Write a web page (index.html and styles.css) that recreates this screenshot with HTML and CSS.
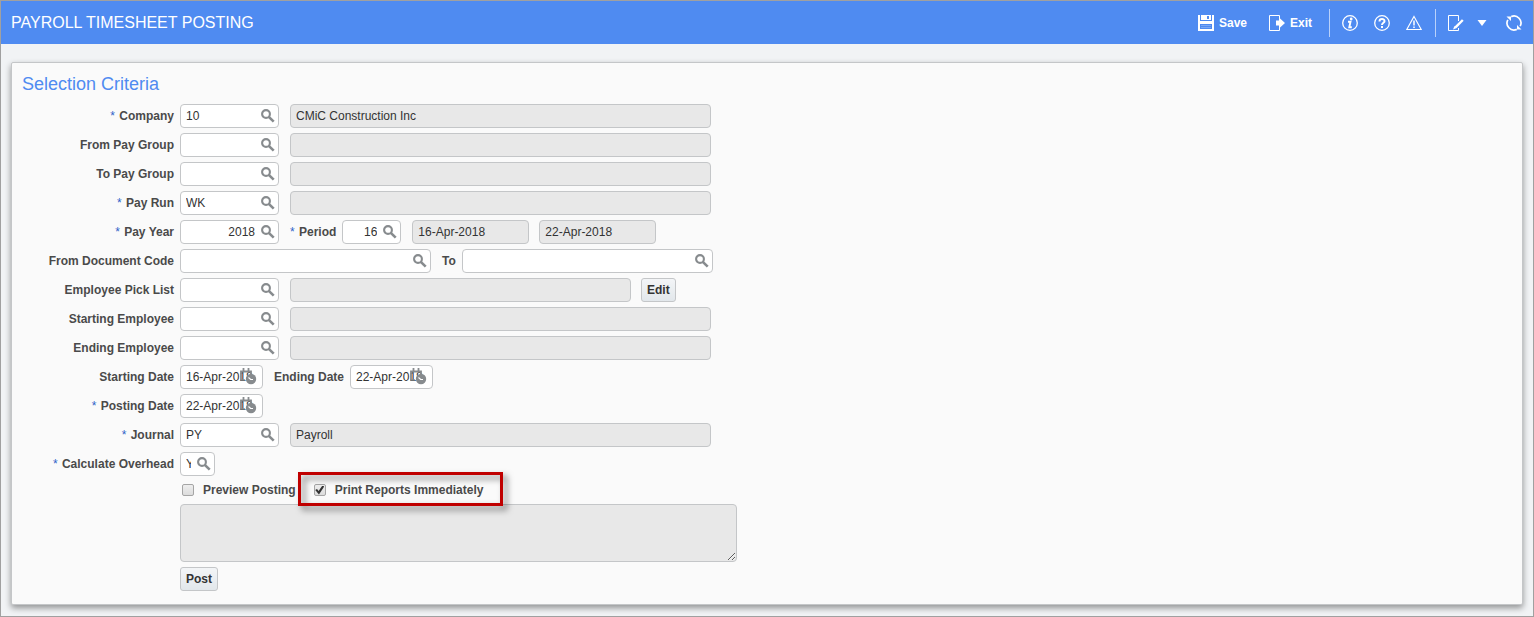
FILE: index.html
```html
<!DOCTYPE html>
<html lang="en">
<head>
    <meta charset="UTF-8">
    <meta name="viewport" content="width=device-width, initial-scale=1.0">
    <title>Payroll Timesheet Posting</title>
    <link rel="stylesheet" href="styles.css">
</head>
<body>

<!-- Shared icons -->
<svg class="sprite" aria-hidden="true">
    <symbol id="lens" viewBox="0 0 14 14">
        <circle cx="5" cy="5" r="3.9" fill="none" stroke="#878b8e" stroke-width="2.1"/>
        <path d="M7.8 7.8L12.7 12.7" stroke="#878b8e" stroke-width="2.6"/>
    </symbol>
    <symbol id="calendar" viewBox="0 0 17 17">
        <path d="M1 12V3.5H11V6M3.5 0V4M8.5 0V4" fill="none" stroke="#878b8e" stroke-width="1.8"/>
        <path d="M0 12H5" stroke="#878b8e" stroke-width="1.4"/>
        <circle cx="11" cy="11" r="5.2" fill="#878b8e"/>
        <path d="M8.5 9.5L10.7 11.5H13" fill="none" stroke="#fff" stroke-width="1.2"/>
    </symbol>
</svg>

<header class="topbar">
    <h1>PAYROLL TIMESHEET POSTING</h1>
    <div class="toolbar">
        <div class="group actions">
            <button type="button">
                <svg width="16" height="16" viewBox="0 0 16 16" fill="#fff">
                    <path d="M0 0H2V6H14V0H16V16H0ZM2 9V14H14V9Z" fill-rule="evenodd"/>
                    <path d="M3 0H13V5H3ZM9 1V4H11V1Z" fill-rule="evenodd"/>
                    <path d="M3 10H13V11H3ZM3 12H13V13H3Z" opacity=".25"/>
                </svg>
                Save
            </button>
            <button type="button">
                <svg width="16" height="16" viewBox="0 0 16 16">
                    <path d="M10.5 4V0.5H0.5V15.5H10.5V12" fill="none" stroke="#fff"/>
                    <path d="M7 5.5H10V2.5L16 8L10 13.5V10.5H7Z" fill="#fff"/>
                </svg>
                Exit
            </button>
        </div>
        <div class="group help">
            <button type="button" aria-label="Information">
                <svg width="16" height="16" viewBox="0 0 16 16">
                    <circle cx="8" cy="8" r="7.3" fill="none" stroke="#fff" stroke-width="1.3"/>
                    <circle cx="9.2" cy="4" r="1.4" fill="#fff"/>
                    <path d="M6 6.8H8.5L7.3 12.2H9.8" fill="none" stroke="#fff" stroke-width="1.9"/>
                </svg>
            </button>
            <button type="button" aria-label="Help">
                <svg width="16" height="16" viewBox="0 0 16 16">
                    <circle cx="8" cy="8" r="7.3" fill="none" stroke="#fff" stroke-width="1.3"/>
                    <path d="M5.5 6.4C5.5 3.2 10.5 3.3 10.5 6.2C10.5 7.8 8 7.7 8 10" fill="none" stroke="#fff" stroke-width="2"/>
                    <path d="M7 11H9V13H7Z" fill="#fff"/>
                </svg>
            </button>
            <button type="button" aria-label="Warnings">
                <svg width="16" height="16" viewBox="0 0 16 16">
                    <path d="M8 1.5L15.2 14.5H0.8Z" fill="none" stroke="#fff" stroke-width="1.1"/>
                    <path d="M8 5.5V10.5M8 11.5V13" stroke="#fff" stroke-width="1.5"/>
                </svg>
            </button>
        </div>
        <div class="group view">
            <button type="button" aria-label="Edit layout">
                <svg width="16" height="16" viewBox="0 0 16 16">
                    <path d="M10.5 6V0.5H0.5V15.5H10.5V13" fill="none" stroke="#fff"/>
                    <path d="M14.8 5L7.5 12.4" stroke="#fff" stroke-width="2.4"/>
                    <path d="M6.5 11L8.7 13.1L5 14.5Z" fill="#fff"/>
                </svg>
            </button>
            <button type="button" aria-label="More">
                <svg width="10" height="6" viewBox="0 0 10 6"><path d="M0.5 0H9.5L5 6Z" fill="#fff"/></svg>
            </button>
            <button type="button" class="refresh" aria-label="Refresh">
                <svg width="16" height="16" viewBox="0 0 16 16">
                    <path d="M5.2 1.6A7 7 0 0 1 14.2 11.2M10.8 14.4A7 7 0 0 1 1.8 4.8" fill="none" stroke="#fff" stroke-width="1.7"/>
                    <path d="M0.5 1.5H5V6ZM15.5 14.5H11V10Z" fill="#fff"/>
                </svg>
            </button>
        </div>
    </div>
</header>

<main class="panel">
    <h2>Selection Criteria</h2>
    <form class="criteria">
        <div class="row">
            <label class="name" for="company"><span class="req">*</span> Company</label>
            <span class="field code"><input type="text" id="company" value="10"><svg class="lens"><use href="#lens"/></svg></span>
            <input class="desc" type="text" value="CMiC Construction Inc" aria-label="Company name" readonly>
        </div>
        <div class="row">
            <label class="name" for="fromGroup">From Pay Group</label>
            <span class="field code"><input type="text" id="fromGroup"><svg class="lens"><use href="#lens"/></svg></span>
            <input class="desc" type="text" aria-label="From pay group name" readonly>
        </div>
        <div class="row">
            <label class="name" for="toGroup">To Pay Group</label>
            <span class="field code"><input type="text" id="toGroup"><svg class="lens"><use href="#lens"/></svg></span>
            <input class="desc" type="text" aria-label="To pay group name" readonly>
        </div>
        <div class="row">
            <label class="name" for="payRun"><span class="req">*</span> Pay Run</label>
            <span class="field code"><input type="text" id="payRun" value="WK"><svg class="lens"><use href="#lens"/></svg></span>
            <input class="desc" type="text" aria-label="Pay run name" readonly>
        </div>
        <div class="row">
            <label class="name" for="payYear"><span class="req">*</span> Pay Year</label>
            <span class="field code number"><input type="text" id="payYear" value="2018"><svg class="lens"><use href="#lens"/></svg></span>
            <label for="period"><span class="req">*</span> Period</label>
            <span class="field period number"><input type="text" id="period" value="16"><svg class="lens"><use href="#lens"/></svg></span>
            <input class="desc date-desc" type="text" value="16-Apr-2018" aria-label="Period start" readonly>
            <input class="desc date-desc" type="text" value="22-Apr-2018" aria-label="Period end" readonly>
        </div>
        <div class="row">
            <label class="name" for="fromDoc">From Document Code</label>
            <span class="field document"><input type="text" id="fromDoc"><svg class="lens"><use href="#lens"/></svg></span>
            <label for="toDoc">To</label>
            <span class="field document"><input type="text" id="toDoc"><svg class="lens"><use href="#lens"/></svg></span>
        </div>
        <div class="row">
            <label class="name" for="pickList">Employee Pick List</label>
            <span class="field code"><input type="text" id="pickList"><svg class="lens"><use href="#lens"/></svg></span>
            <input class="desc pick-desc" type="text" aria-label="Pick list name" readonly>
            <button type="button" class="btn">Edit</button>
        </div>
        <div class="row">
            <label class="name" for="startEmp">Starting Employee</label>
            <span class="field code"><input type="text" id="startEmp"><svg class="lens"><use href="#lens"/></svg></span>
            <input class="desc" type="text" aria-label="Starting employee name" readonly>
        </div>
        <div class="row">
            <label class="name" for="endEmp">Ending Employee</label>
            <span class="field code"><input type="text" id="endEmp"><svg class="lens"><use href="#lens"/></svg></span>
            <input class="desc" type="text" aria-label="Ending employee name" readonly>
        </div>
        <div class="row">
            <label class="name" for="startDate">Starting Date</label>
            <span class="field date"><input type="text" id="startDate" value="16-Apr-2018"><svg class="calendar"><use href="#calendar"/></svg></span>
            <label for="endDate">Ending Date</label>
            <span class="field date"><input type="text" id="endDate" value="22-Apr-2018"><svg class="calendar"><use href="#calendar"/></svg></span>
        </div>
        <div class="row">
            <label class="name" for="postDate"><span class="req">*</span> Posting Date</label>
            <span class="field date"><input type="text" id="postDate" value="22-Apr-2018"><svg class="calendar"><use href="#calendar"/></svg></span>
        </div>
        <div class="row">
            <label class="name" for="journal"><span class="req">*</span> Journal</label>
            <span class="field code"><input type="text" id="journal" value="PY"><svg class="lens"><use href="#lens"/></svg></span>
            <input class="desc" type="text" value="Payroll" aria-label="Journal name" readonly>
        </div>
        <div class="row">
            <label class="name" for="overhead"><span class="req">*</span> Calculate Overhead</label>
            <span class="field flag"><input type="text" id="overhead" value="Y"><svg class="lens"><use href="#lens"/></svg></span>
        </div>
        <div class="checks">
            <label><input type="checkbox"> Preview Posting</label>
            <label class="highlight"><input type="checkbox" checked> Print Reports Immediately</label>
        </div>
        <textarea class="log" aria-label="Posting messages" readonly></textarea>
        <button type="button" class="btn post">Post</button>
    </form>
</main>

</body>
</html>
```
FILE: styles.css
```css
* {
    box-sizing: border-box;
}
body {
    margin: 0;
    min-height: 100vh;
    border: 1px solid #a0a0a0;
    background-color: #f1f3f5;
    font-family: "Liberation Sans", Arial, sans-serif;
    font-size: 12px;
    color: #333;
}
.sprite {
    position: absolute;
    width: 0;
    height: 0;
}
svg {
    display: block;
}
button, input, textarea {
    font: inherit;
    color: inherit;
    margin: 0;
}

/* Top bar */
.topbar {
    display: flex;
    justify-content: space-between;
    align-items: center;
    height: 43px;
    padding: 0 11px 0 10px;
    background-color: #4f8bf1;
    color: #fff;
}
h1 {
    margin: 0;
    font-size: 16px;
    font-weight: normal;
}
.toolbar, .group {
    display: flex;
    align-items: center;
}
.group {
    height: 28px;
}
.group button {
    display: flex;
    align-items: center;
    gap: 5px;
    padding: 0;
    border: none;
    background: none;
    font-weight: bold;
    cursor: pointer;
}
.actions {
    gap: 22px;
    padding-right: 17px;
}
.help {
    gap: 16px;
    padding: 0 13px 0 12px;
}
.view {
    gap: 13px;
    padding-left: 12px;
}
.help, .view {
    border-left: 1px solid #b9d1fa;
}
.group .refresh {
    margin-left: 6px;
}

/* Panel */
.panel {
    margin: 18px 10px 11px;
    padding: 10px 10px 13px;
    border: 1px solid #c4c6c8;
    border-radius: 2px;
    background-color: #fafafa;
    box-shadow: 0 3px 6px rgba(0, 0, 0, 0.4);
}
h2 {
    margin: 0 0 9px;
    font-size: 18px;
    line-height: 22px;
    font-weight: normal;
    color: #4f8bf1;
}
.criteria {
    display: flex;
    flex-direction: column;
    gap: 5px;
}
.row {
    display: flex;
    align-items: center;
    height: 24px;
}
label {
    font-weight: bold;
    color: #4a4a4a;
}
.row label {
    margin-right: 6px;
}
.name {
    width: 152px;
    text-align: right;
}
.req {
    margin-right: 1px;
    font-weight: normal;
    color: #2f62c9;
}
.field {
    position: relative;
    margin-right: 11px;
}
.field input, .desc {
    display: block;
    width: 100%;
    height: 24px;
    padding: 0 5px;
    border: 1px solid #c4c6c8;
    border-radius: 4px;
    background-color: #fff;
}
.code {
    width: 99px;
}
.period {
    width: 59px;
}
.document {
    width: 251px;
}
.date {
    width: 83px;
}
.flag {
    width: 35px;
}
.number input {
    padding-right: 23px;
    text-align: right;
}
.flag input {
    padding-right: 23px;
}
.row .desc {
    width: 421px;
    background-color: #e8e8e8;
}
.row .date-desc {
    width: 117px;
    margin-right: 10px;
}
.row .pick-desc {
    width: 341px;
    margin-right: 10px;
}
.lens {
    position: absolute;
    top: 5px;
    right: 4px;
    width: 14px;
    height: 14px;
}
.calendar {
    position: absolute;
    top: 3px;
    right: 6px;
    width: 17px;
    height: 17px;
}
.btn {
    height: 24px;
    padding: 0 5px;
    border: 1px solid #c4c6c8;
    border-radius: 3px;
    background: linear-gradient(#f3f5f7, #e2e7eb);
    font-weight: bold;
    cursor: pointer;
}

/* Options and output */
.checks {
    display: flex;
    gap: 18px;
    height: 18px;
    margin-left: 160px;
}
.checks label {
    display: flex;
    align-items: center;
    gap: 9px;
}
.checks input {
    appearance: none;
    width: 12px;
    height: 12px;
    border: 1px solid #a5a5a5;
    border-radius: 2px;
    background: linear-gradient(#eee, #dcdcdc);
}
.checks input:checked {
    display: grid;
    place-items: center;
}
.checks input:checked::before {
    content: "";
    width: 9px;
    height: 9px;
    background-color: #333;
    clip-path: polygon(0 50%, 20% 38%, 38% 60%, 80% 0, 100% 12%, 42% 100%);
}
.highlight {
    position: relative;
}
.highlight::after {
    content: "";
    position: absolute;
    inset: -9px -20px -7px -16px;
    border: 3px solid #c00000;
    filter: drop-shadow(4px 4px 3px rgba(0, 0, 0, 0.5));
    pointer-events: none;
}
.log {
    width: 557px;
    height: 58px;
    margin-left: 158px;
    border: 1px solid #c4c6c8;
    border-radius: 4px;
    background-color: #e8e8e8;
}
.post {
    align-self: flex-start;
    margin-left: 158px;
}
```
